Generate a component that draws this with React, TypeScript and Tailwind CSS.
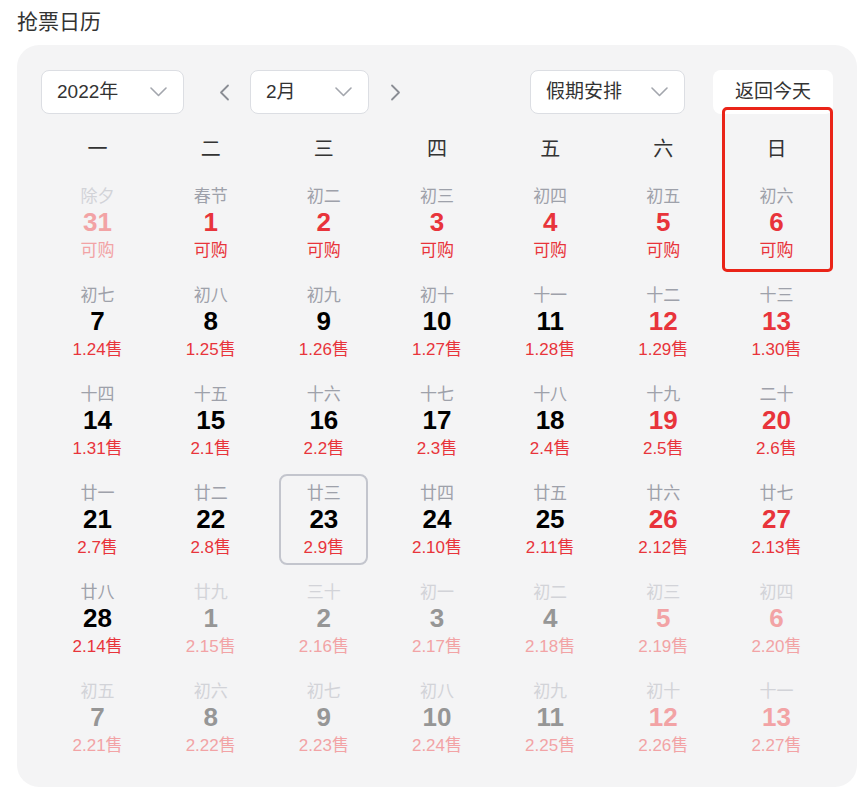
import React from "react";

type Tone = "cur" | "red" | "prev" | "next" | "nextRed";

type Day = {
  d: number;
  lunar: string;
  sub: string;
  tone: Tone;
  selected?: boolean;
};

const weekdays = ["一", "二", "三", "四", "五", "六", "日"];

function buildDays(): Day[] {
  const lunarFeb = [
    "春节", "初二", "初三", "初四", "初五", "初六", "初七", "初八", "初九", "初十",
    "十一", "十二", "十三", "十四", "十五", "十六", "十七", "十八", "十九", "二十",
    "廿一", "廿二", "廿三", "廿四", "廿五", "廿六", "廿七", "廿八",
  ];
  const saleFeb = [
    "可购", "可购", "可购", "可购", "可购", "可购",
    "1.24售", "1.25售", "1.26售", "1.27售", "1.28售", "1.29售", "1.30售",
    "1.31售", "2.1售", "2.2售", "2.3售", "2.4售", "2.5售", "2.6售",
    "2.7售", "2.8售", "2.9售", "2.10售", "2.11售", "2.12售", "2.13售", "2.14售",
  ];
  const days: Day[] = [{ d: 31, lunar: "除夕", sub: "可购", tone: "prev" }];
  // grid starts on Monday; day i of Feb sits in column i % 7 (5 = Sat, 6 = Sun)
  for (let i = 1; i <= 28; i++) {
    const weekend = i % 7 === 5 || i % 7 === 6;
    days.push({
      d: i,
      lunar: lunarFeb[i - 1],
      sub: saleFeb[i - 1],
      tone: i <= 6 || weekend ? "red" : "cur",
      selected: i === 23,
    });
  }
  const lunarMar = ["廿九", "三十", "初一", "初二", "初三", "初四", "初五", "初六", "初七", "初八", "初九", "初十", "十一"];
  for (let i = 1; i <= 13; i++) {
    const weekend = i % 7 === 5 || i % 7 === 6;
    days.push({
      d: i,
      lunar: lunarMar[i - 1],
      sub: `2.${14 + i}售`,
      tone: weekend ? "nextRed" : "next",
    });
  }
  return days;
}

const lunarCls: Record<Tone, string> = {
  cur: "text-[#9ea1aa]",
  red: "text-[#9ea1aa]",
  prev: "text-[#d2d3d8]",
  next: "text-[#d2d3d8]",
  nextRed: "text-[#d2d3d8]",
};
const dateCls: Record<Tone, string> = {
  cur: "text-black",
  red: "text-[#e8343b]",
  prev: "text-[#f2a3a5]",
  next: "text-[#969696]",
  nextRed: "text-[#f2a3a5]",
};
const subCls: Record<Tone, string> = {
  cur: "text-[#e8343b]",
  red: "text-[#e8343b]",
  prev: "text-[#f2a3a5]",
  next: "text-[#f2a3a5]",
  nextRed: "text-[#f2a3a5]",
};

function ChevronDown() {
  return (
    <svg width="17" height="10" viewBox="0 0 17 10" fill="none">
      <polyline points="1,1 8.5,8.5 16,1" stroke="#a3a6ad" strokeWidth="1.6" strokeLinecap="round" strokeLinejoin="round" />
    </svg>
  );
}

function Select({ label, width }: { label: string; width: string }) {
  return (
    <div className={`flex h-[44px] items-center justify-between rounded-[8px] border border-[#dcdee3] bg-white pl-[15px] pr-[16px] ${width}`}>
      <span className="text-[19px] text-[#333]">{label}</span>
      <ChevronDown />
    </div>
  );
}

function Arrow({ dir }: { dir: "left" | "right" }) {
  return (
    <div className="flex h-[44px] w-[24px] items-center justify-center">
      <svg width="11" height="17" viewBox="0 0 11 17" fill="none">
        <polyline
          points={dir === "left" ? "9,1.5 2,8.5 9,15.5" : "2,1.5 9,8.5 2,15.5"}
          stroke="#8a8d94"
          strokeWidth="1.8"
          strokeLinecap="round"
          strokeLinejoin="round"
        />
      </svg>
    </div>
  );
}

function Cell({ day }: { day: Day }) {
  return (
    <div
      className={`mx-auto flex h-[91px] w-[89px] flex-col items-center ${
        day.selected ? "rounded-[8px] border-2 border-[#c3c5cd] pt-[7px]" : "pt-[9px]"
      }`}
    >
      <div className={`text-[17px] leading-[22px] ${lunarCls[day.tone]}`}>{day.lunar}</div>
      <div className={`text-[26px] font-bold leading-[28px] ${dateCls[day.tone]}`}>{day.d}</div>
      <div className={`mt-[4px] text-[17px] leading-[22px] ${subCls[day.tone]}`}>{day.sub}</div>
    </div>
  );
}

export default function App() {
  const days = buildDays();
  return (
    <div
      className="min-h-[792px] bg-white pl-[17px] pt-[8px]"
      style={{ fontFamily: '"Liberation Sans", "Noto Sans CJK SC", sans-serif' }}
    >
      <h1 className="mb-[9px] text-[21px] leading-[28px] text-[#333]">抢票日历</h1>

      <div className="relative w-[840px] rounded-[22px] bg-[#f4f4f5] px-[24px] pb-[24px] pt-[25px]">
        <div className="flex items-center">
          <Select label="2022年" width="w-[143px]" />
          <div className="ml-[28px] mr-[14px]">
            <Arrow dir="left" />
          </div>
          <Select label="2月" width="w-[119px]" />
          <div className="ml-[14px]">
            <Arrow dir="right" />
          </div>
          <div className="ml-auto">
            <Select label="假期安排" width="w-[155px]" />
          </div>
          <button className="ml-[28px] flex h-[44px] w-[120px] items-center justify-center rounded-[8px] bg-white text-[19px] text-[#333]">
            返回今天
          </button>
        </div>

        <div className="mt-[15px] mb-[8px] grid grid-cols-7">
          {weekdays.map((w) => (
            <div key={w} className="flex h-[40px] items-center justify-center text-[20px] text-[#333]">
              {w}
            </div>
          ))}
        </div>

        <div className="grid grid-cols-7 gap-y-[8px]">
          {days.map((day, i) => (
            <Cell key={i} day={day} />
          ))}
        </div>

        <div className="pointer-events-none absolute left-[705px] top-[62px] h-[165px] w-[111px] rounded-[5px] border-[3px] border-[#ea2418]" />
      </div>
    </div>
  );
}
